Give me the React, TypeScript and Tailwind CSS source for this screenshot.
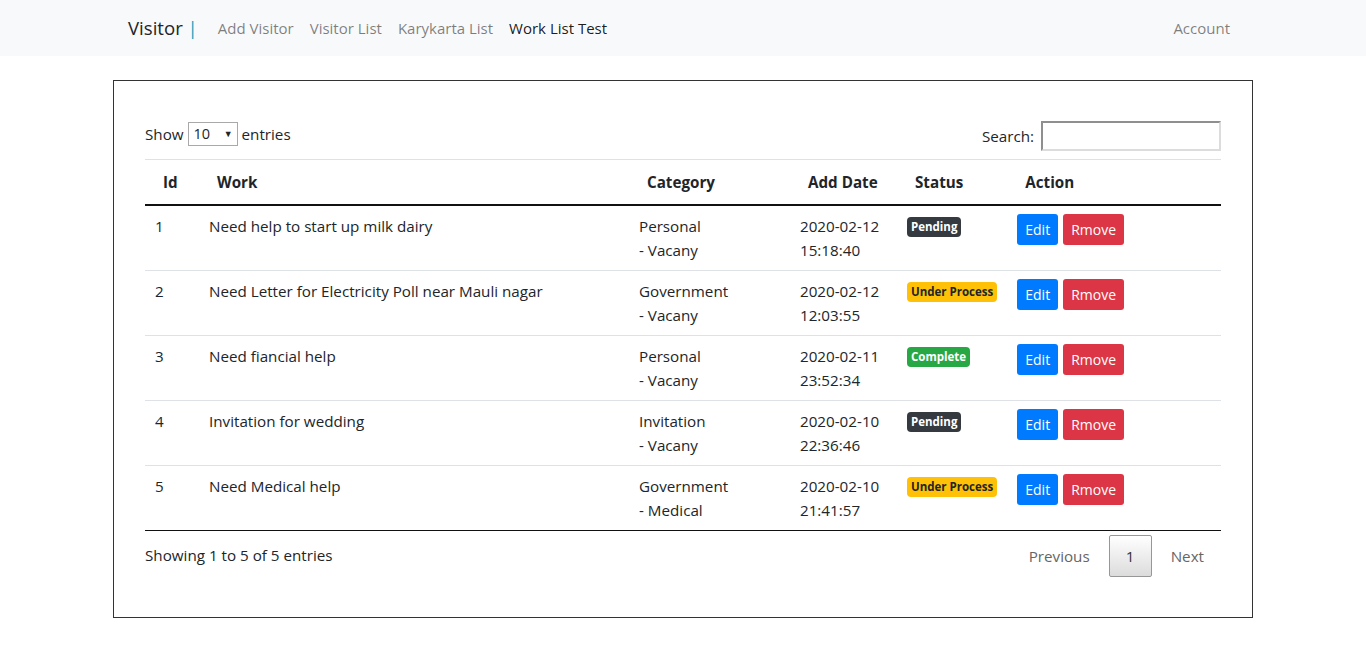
import React from "react";

type Row = {
    id: number;
    work: string;
    category: string;
    sub: string;
    date: string;
    time: string;
    status: "Pending" | "Under Process" | "Complete";
};

const ROWS: Row[] = [
    { id: 1, work: "Need help to start up milk dairy", category: "Personal", sub: "Vacany", date: "2020-02-12", time: "15:18:40", status: "Pending" },
    { id: 2, work: "Need Letter for Electricity Poll near Mauli nagar", category: "Government", sub: "Vacany", date: "2020-02-12", time: "12:03:55", status: "Under Process" },
    { id: 3, work: "Need fiancial help", category: "Personal", sub: "Vacany", date: "2020-02-11", time: "23:52:34", status: "Complete" },
    { id: 4, work: "Invitation for wedding", category: "Invitation", sub: "Vacany", date: "2020-02-10", time: "22:36:46", status: "Pending" },
    { id: 5, work: "Need Medical help", category: "Government", sub: "Medical", date: "2020-02-10", time: "21:41:57", status: "Under Process" },
];

function Badge({ status }: { status: Row["status"] }) {
    const tone =
        status === "Pending"
            ? "bg-[#343a40] text-white"
            : status === "Complete"
            ? "bg-[#28a745] text-white"
            : "bg-[#ffc107] text-[#212529]";
    return (
        <span className={`block whitespace-nowrap rounded-[4px] px-[4px] py-[4px] text-[11.5px] font-bold leading-[12px] ${tone}`}>
            {status}
        </span>
    );
}

export default function App() {
    return (
        <div className="min-h-[657px] bg-white text-[15.2px] text-[#212529]" style={{ fontFamily: '"Open Sans", "Liberation Sans", sans-serif' }}>
            {/* navbar */}
            <nav className="h-[56px] bg-[#f8f9fa]">
                <div className="mx-auto flex h-full w-[1140px] items-center px-[15px]">
                    <span className="mr-[12px] text-[18.6px] text-[#212529]">
                        Visitor <span className="text-[#17a2b8]">|</span>
                    </span>
                    <div className="flex text-[15px] text-[rgba(0,0,0,0.5)]">
                        <a className="px-[8px]">Add Visitor</a>
                        <a className="px-[8px]">Visitor List</a>
                        <a className="px-[8px]">Karykarta List</a>
                        <a className="px-[8px] text-[rgba(0,0,0,0.9)]">Work List Test</a>
                    </div>
                    <a className="ml-auto px-[8px] text-[15px] text-[rgba(0,0,0,0.5)]">Account</a>
                </div>
            </nav>

            <div className="mx-auto mt-[24px] w-[1140px] border border-[#333] px-[31px] pt-[40px] pb-[40px]">
                {/* controls */}
                <div className="flex items-start justify-between pb-[8px]">
                    <label className="mt-[1px] flex items-center leading-[24px]">
                        Show
                        <span className="mx-[4px] flex h-[24px] w-[50px] items-center justify-between border border-[#a9a9a9] pl-[5px] pr-[4px] text-[14.5px]">
                            10
                            <span className="text-[9px]">▼</span>
                        </span>
                        entries
                    </label>
                    <label className="flex items-center">
                        Search:
                        <span className="ml-[7px] block h-[30px] w-[180px] border-2 border-t-[#8f8f8f] border-l-[#8f8f8f] border-r-[#dcdcdc] border-b-[#dcdcdc] bg-white" />
                    </label>
                </div>

                {/* table */}
                <table className="w-full border-collapse border-t border-[#dee2e6]">
                    <thead>
                        <tr className="border-b-2 border-[#111] font-bold leading-[24px]">
                            <th className="w-[54px] whitespace-nowrap px-[18px] py-[10px] text-left">Id</th>
                            <th className="w-[430px] whitespace-nowrap px-[18px] py-[10px] text-left">Work</th>
                            <th className="w-[161px] whitespace-nowrap px-[18px] py-[10px] text-left">Category</th>
                            <th className="w-[107px] whitespace-nowrap px-[18px] py-[10px] text-left">Add Date</th>
                            <th className="w-[108px] whitespace-nowrap px-[18px] py-[10px] text-left">Status</th>
                            <th className="whitespace-nowrap px-[18px] py-[10px] text-left">Action</th>
                        </tr>
                    </thead>
                    <tbody>
                        {ROWS.map((r, i) => (
                            <tr key={r.id} className={i === ROWS.length - 1 ? "border-b border-[#111]" : "border-b border-[#dee2e6]"}>
                                <td className="px-[10px] py-[8px] align-top leading-[24px]">{r.id}</td>
                                <td className="px-[10px] py-[8px] align-top leading-[24px]">{r.work}</td>
                                <td className="px-[10px] py-[8px] align-top leading-[24px]">
                                    {r.category}
                                    <br />- {r.sub}
                                </td>
                                <td className="px-[10px] py-[8px] align-top leading-[24px]">
                                    {r.date}
                                    <br />
                                    {r.time}
                                </td>
                                <td className="px-[10px] pt-[11px] align-top">
                                    <div className="flex">
                                        <Badge status={r.status} />
                                    </div>
                                </td>
                                <td className="px-[10px] pt-[8px] align-top">
                                    <div className="flex gap-[5px]">
                                        <button className="h-[31px] rounded-[3px] bg-[#007bff] px-[8px] text-[14px] text-white">Edit</button>
                                        <button className="h-[31px] rounded-[3px] bg-[#dc3545] px-[8px] text-[14px] text-white">Rmove</button>
                                    </div>
                                </td>
                            </tr>
                        ))}
                    </tbody>
                </table>

                {/* footer */}
                <div className="flex items-start justify-between pt-[4px]">
                    <div className="pt-[8px] leading-[24px]">Showing 1 to 5 of 5 entries</div>
                    <div className="flex items-center text-[#666]">
                        <span className="px-[19px] py-[8px]">Previous</span>
                        <span className="flex h-[42px] w-[43px] items-center justify-center rounded-[2px] border border-[#979797] bg-gradient-to-b from-white to-[#dcdcdc] text-[#333]">
                            1
                        </span>
                        <span className="pl-[19px] pr-[17px] py-[8px]">Next</span>
                    </div>
                </div>
            </div>
        </div>
    );
}
